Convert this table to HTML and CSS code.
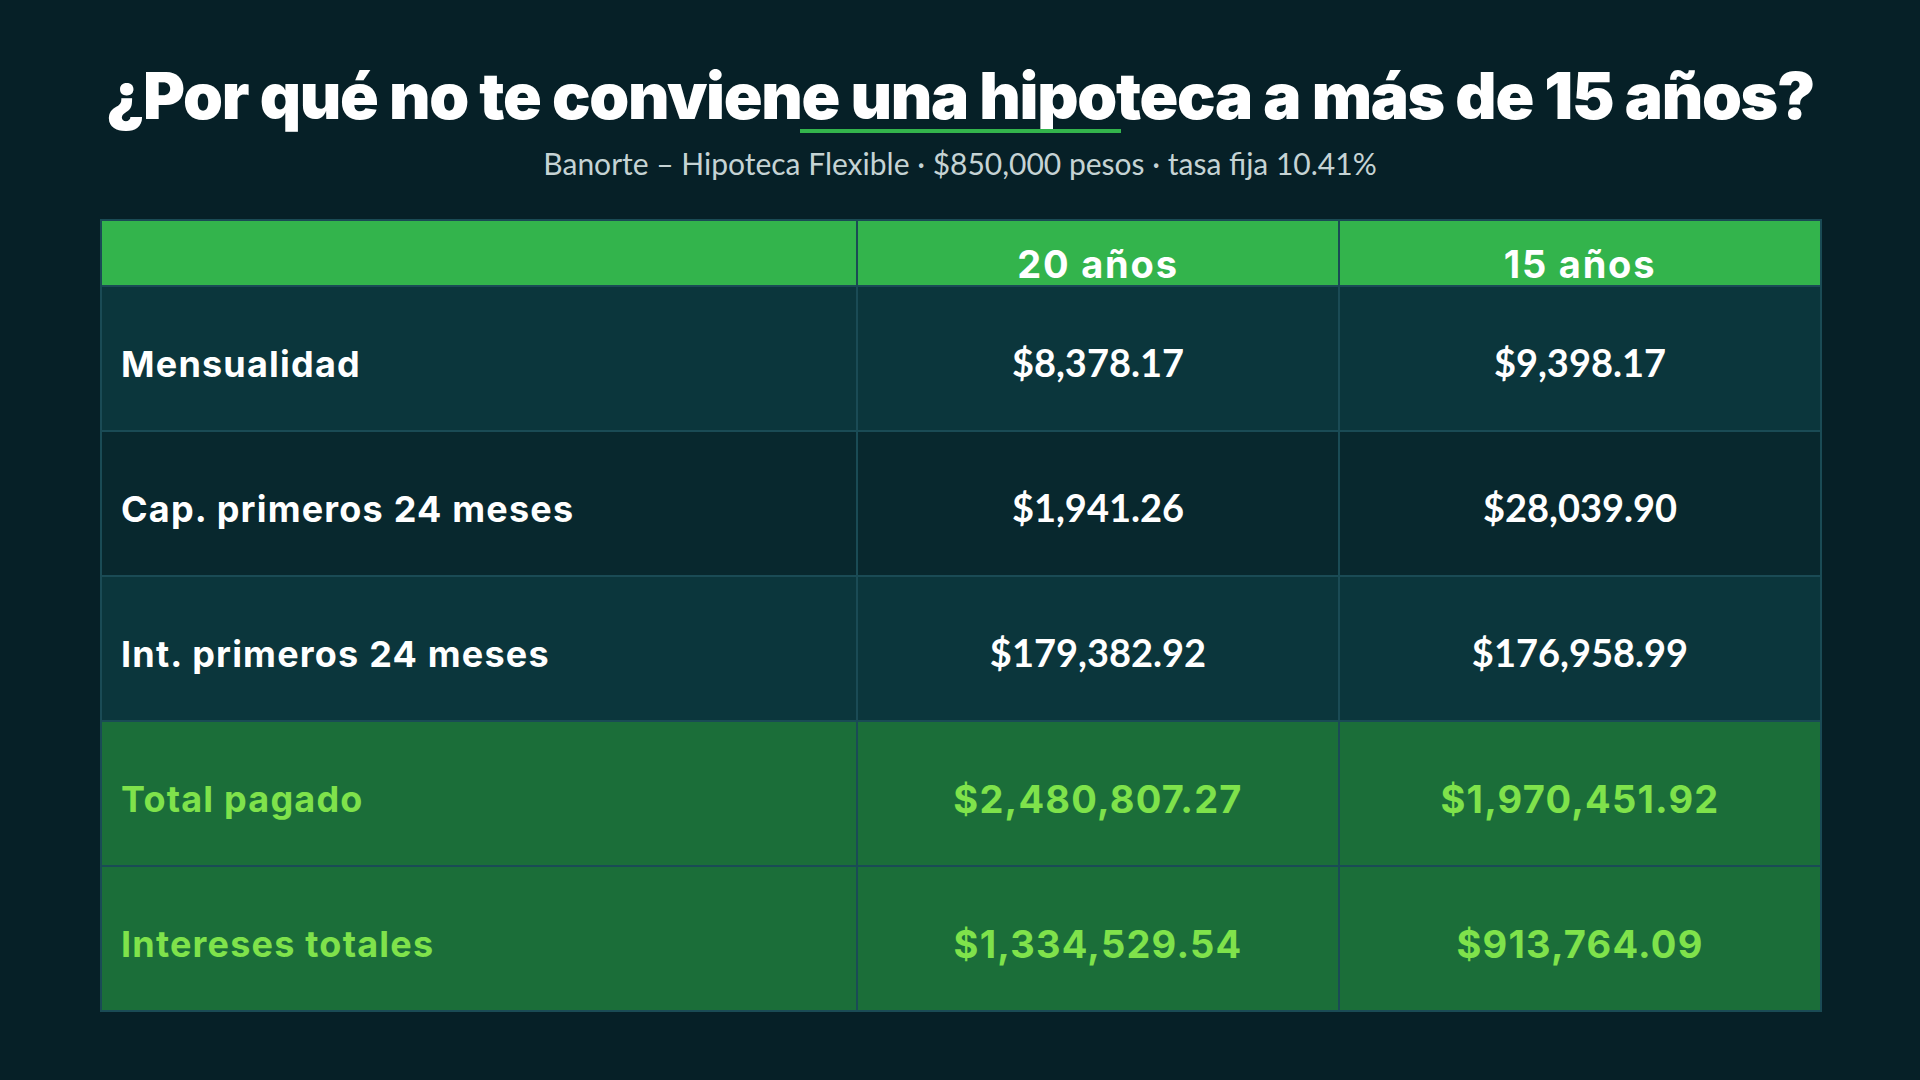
FILE: index.html
```html
<!DOCTYPE html>
<html lang="es">
<head>
<meta charset="utf-8">
<title>Hipoteca a 15 años</title>
<link rel="stylesheet" href="styles.css">
</head>
<body>
<main class="page">
  <header class="heading">
    <h1 class="title">¿Por qué no te conviene una hipoteca a más de 15 años?</h1>
    <div class="title-bar"></div>
    <p class="subtitle">Banorte – Hipoteca Flexible · $850,000 pesos · tasa fija 10.41%</p>
  </header>
  <section class="table">
    <div class="cell head"></div>
    <div class="cell head center">20 años</div>
    <div class="cell head center">15 años</div>

    <div class="cell label row-a">Mensualidad</div>
    <div class="cell value row-a">$8,378.17</div>
    <div class="cell value row-a">$9,398.17</div>

    <div class="cell label row-b">Cap. primeros 24 meses</div>
    <div class="cell value row-b">$1,941.26</div>
    <div class="cell value row-b">$28,039.90</div>

    <div class="cell label row-a">Int. primeros 24 meses</div>
    <div class="cell value row-a">$179,382.92</div>
    <div class="cell value row-a">$176,958.99</div>

    <div class="cell label row-g">Total pagado</div>
    <div class="cell value row-g">$2,480,807.27</div>
    <div class="cell value row-g">$1,970,451.92</div>

    <div class="cell label row-g">Intereses totales</div>
    <div class="cell value row-g">$1,334,529.54</div>
    <div class="cell value row-g">$913,764.09</div>
  </section>
</main>
</body>
</html>
```

FILE: styles.css
```css
* { box-sizing: border-box; }

html, body {
  margin: 0;
  padding: 0;
}

body {
  background: #062027;
  width: 1920px;
  height: 1080px;
  overflow: hidden;
  font-family: "Inter", "Liberation Sans", sans-serif;
  color: #ffffff;
}

.page {
  padding: 64px 100px 0 100px;
}

.heading {
  display: flex;
  flex-direction: column;
  align-items: center;
}

.title {
  margin: 0;
  font-family: "Inter", sans-serif;
  font-weight: 900;
  font-size: 64px;
  line-height: 1;
  letter-spacing: -1.3px;
  color: #ffffff;
  white-space: nowrap;
}

.title-bar {
  width: 321px;
  height: 4px;
  margin-top: 1px;
  background: #33b44c;
}

.subtitle {
  margin: 12px 0 0 0;
  font-family: "Lato", sans-serif;
  font-size: 30px;
  line-height: 1.2;
  color: #c5d3d4;
}

.table {
  margin-top: 38px;
  width: 1722px;
  display: grid;
  grid-template-columns: 754px 480px 480px;
  grid-template-rows: 64px repeat(5, 143px);
  gap: 2px;
  padding: 2px;
  background: #1a4b55;
}

.cell {
  display: flex;
  align-items: center;
}

.head {
  background: #33b44c;
  font-weight: 700;
  font-size: 38px;
  letter-spacing: 1.8px;
  padding-top: 21px;
  color: #ffffff;
}

.center { justify-content: center; }

.label {
  padding-left: 19px;
  padding-top: 10px;
  font-weight: 700;
  font-size: 36px;
  letter-spacing: 1.2px;
}

.value {
  justify-content: center;
  padding-top: 6px;
  font-family: "Lato", sans-serif;
  font-weight: 700;
  font-size: 38px;
}

.row-a { background: #0b363c; }
.row-b { background: #08282e; }

.row-g {
  background: #1b6e39;
  color: #7fe24b;
}

.row-g.value {
  font-family: "Inter", sans-serif;
  font-weight: 700;
  font-size: 38px;
  letter-spacing: 1.2px;
  padding-top: 10px;
}
```
